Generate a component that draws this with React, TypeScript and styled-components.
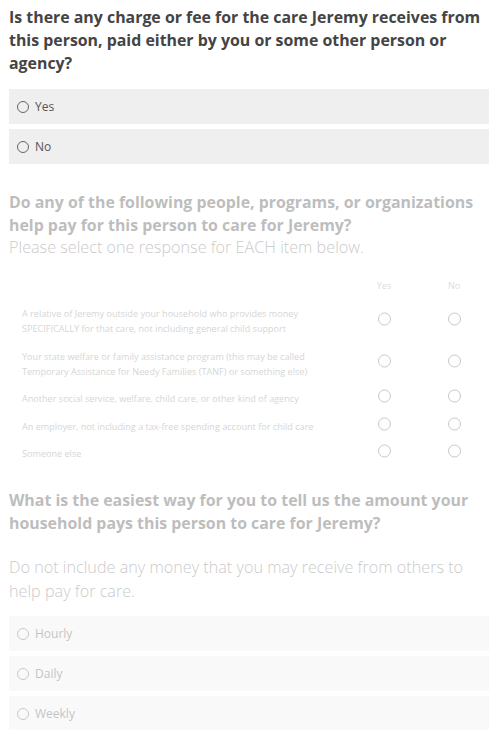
import React from "react";
import styled, { createGlobalStyle } from "styled-components";

const GlobalStyle = createGlobalStyle`
  html, body { margin: 0; padding: 0; background: #ffffff; }
  body { font-family: "Open Sans", "Noto Sans", sans-serif; }
  * { box-sizing: border-box; }
`;

const Page = styled.main`
  display: flex;
  flex-direction: column;
  padding: 6px 15px 0 9px;
  width: 504px;
  height: 730px;
  overflow: hidden;
`;

const Question = styled.section<{ $disabled?: boolean; $gap?: number }>`
  display: flex;
  flex-direction: column;
  margin-top: ${(p) => p.$gap ?? 0}px;
  opacity: ${(p) => (p.$disabled ? 0.35 : 1)};
`;

const Heading = styled.h2`
  margin: 0;
  font-family: "Open Sans", sans-serif;
  font-weight: 700;
  font-size: 15.9px;
  line-height: 23px;
  color: #444444;
`;

const Subtitle = styled.p<{ $lh: number; $mt: number }>`
  margin: ${(p) => p.$mt}px 0 0;
  font-family: "Open Sans", sans-serif;
  font-weight: 300;
  font-size: 16.2px;
  line-height: ${(p) => p.$lh}px;
  color: #666666;
`;

const OptionList = styled.div<{ $mt: number }>`
  display: flex;
  flex-direction: column;
  gap: 5px;
  margin-top: ${(p) => p.$mt}px;
`;

const Option = styled.label`
  display: flex;
  align-items: center;
  gap: 6px;
  height: 35px;
  padding-left: 8px;
  background: #efefef;
  font-family: "Open Sans", sans-serif;
  font-size: 12px;
  color: #555555;
`;

const Radio = styled.span<{ $size?: number; $lift?: number }>`
  display: inline-block;
  flex: none;
  width: ${(p) => p.$size ?? 12}px;
  height: ${(p) => p.$size ?? 12}px;
  border: 1px solid #666666;
  border-radius: 50%;
  background: transparent;
  transform: translateY(${(p) => -(p.$lift ?? 0)}px);
`;

const Matrix = styled.div`
  display: grid;
  grid-template-columns: 1fr 70px 70px;
  row-gap: 12.5px;
  margin-top: 23px;
`;

const ColHead = styled.div`
  font-family: "Open Sans", sans-serif;
  font-size: 9px;
  line-height: 12px;
  color: #999999;
  text-align: center;
  margin-bottom: 1.5px;
`;

const RowLabel = styled.div`
  padding-left: 13px;
  padding-right: 10px;
  font-family: "Open Sans", sans-serif;
  font-size: 9.1px;
  line-height: 15px;
  color: #888888;
`;

const RadioCell = styled.div`
  display: flex;
  justify-content: center;
  align-items: center;
`;

const matrixRows = [
  "A relative of Jeremy outside your household who provides money SPECIFICALLY for that care, not including general child support",
  "Your state welfare or family assistance program (this may be called Temporary Assistance for Needy Families (TANF) or something else)",
  "Another social service, welfare, child care, or other kind of agency",
  "An employer, not including a tax-free spending account for child care",
  "Someone else",
];

export default function App() {
  return (
    <>
      <GlobalStyle />
      <Page>
        <Question>
          <Heading>
            Is there any charge or fee for the care Jeremy receives from this person, paid either by you or some other person or agency?
          </Heading>
          <OptionList $mt={14}>
            {["Yes", "No"].map((o) => (
              <Option key={o}>
                <Radio $size={12} />
                {o}
              </Option>
            ))}
          </OptionList>
        </Question>

        <Question $disabled $gap={27}>
          <Heading>
            Do any of the following people, programs, or organizations help pay for this person to care for Jeremy?
          </Heading>
          <Subtitle $lh={20} $mt={0}>
            Please select one response for EACH item below.
          </Subtitle>
          <Matrix>
            <div />
            <ColHead>Yes</ColHead>
            <ColHead>No</ColHead>
            {matrixRows.map((r) => (
              <React.Fragment key={r}>
                <RowLabel>{r}</RowLabel>
                <RadioCell>
                  <Radio $size={13} $lift={2.5} />
                </RadioCell>
                <RadioCell>
                  <Radio $size={13} $lift={2.5} />
                </RadioCell>
              </React.Fragment>
            ))}
          </Matrix>
        </Question>

        <Question $disabled $gap={28}>
          <Heading>
            What is the easiest way for you to tell us the amount your household pays this person to care for Jeremy?
          </Heading>
          <Subtitle $lh={24} $mt={20}>
            Do not include any money that you may receive from others to help pay for care.
          </Subtitle>
          <OptionList $mt={13}>
            {["Hourly", "Daily", "Weekly"].map((o) => (
              <Option key={o}>
                <Radio $size={12} />
                {o}
              </Option>
            ))}
          </OptionList>
        </Question>
      </Page>
    </>
  );
}
